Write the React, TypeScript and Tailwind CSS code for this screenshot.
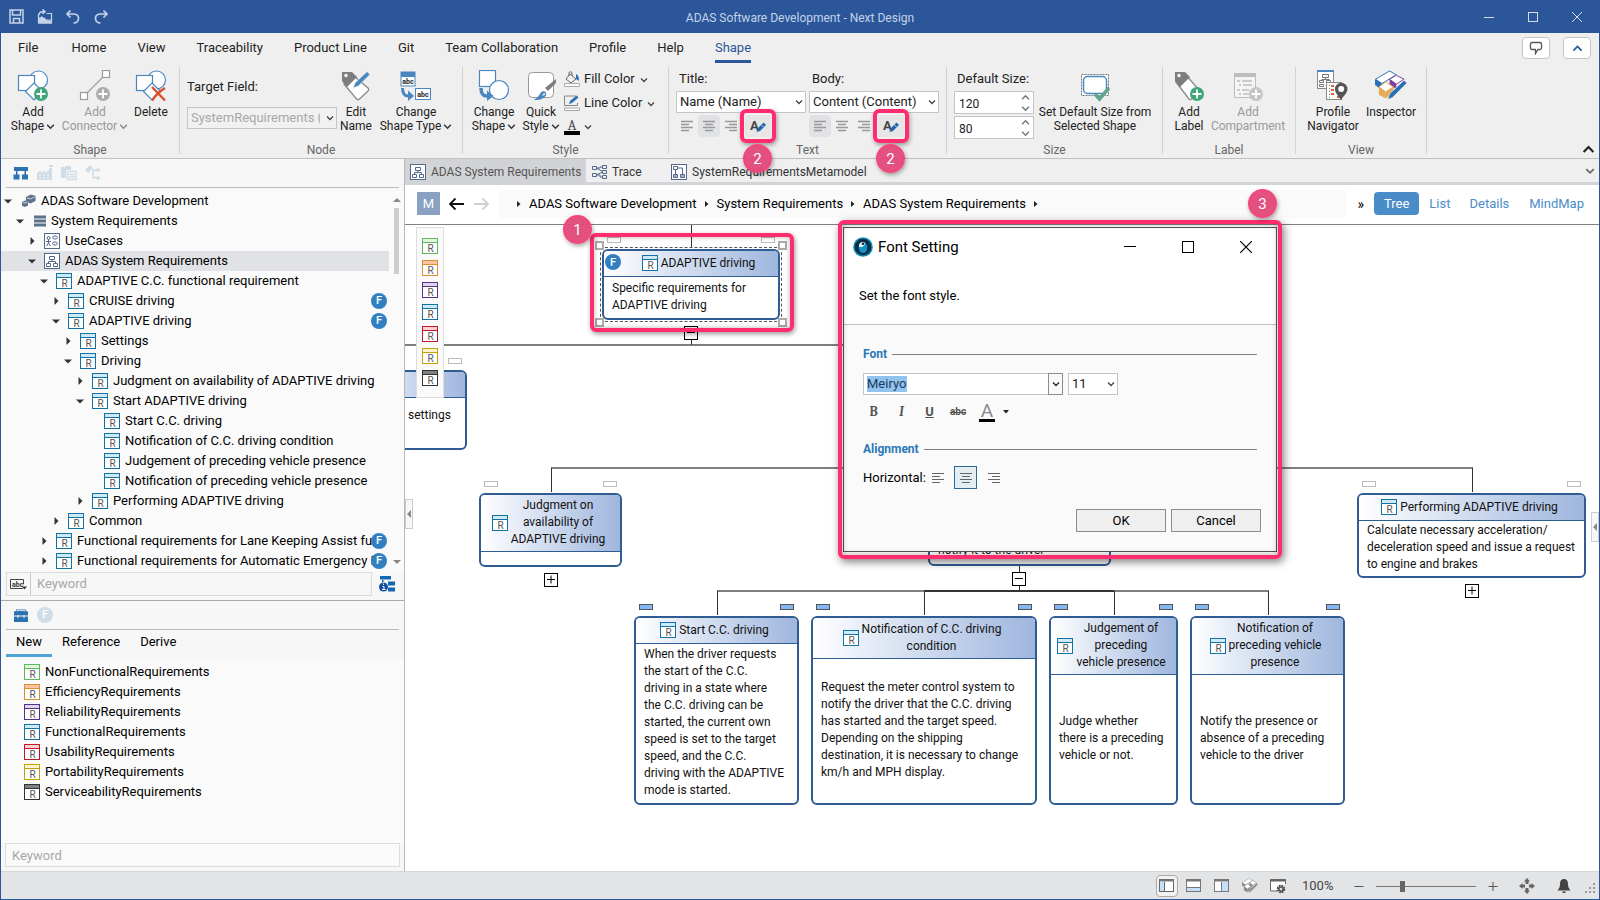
import { useState } from 'react';
import type { ReactNode } from 'react';
import clsx from 'clsx';

type Tone = 'green' | 'orange' | 'purple' | 'blue' | 'red' | 'yellow' | 'black';

const tones: Record<Tone, { line: string; fill: string }> = {
  green: { line: '#5cb85c', fill: '#e6f6dc' },
  orange: { line: '#d9902f', fill: '#fbc4a4' },
  purple: { line: '#5b2d8c', fill: '#dcd6ea' },
  blue: { line: '#1272a6', fill: '#cfe9f5' },
  red: { line: '#c01828', fill: '#fbd0d6' },
  yellow: { line: '#bfa10a', fill: '#fbf3cf' },
  black: { line: '#333333', fill: '#808080' }
};

function ReqIcon({ tone = 'blue' }: { tone?: Tone }) {
  const t = tones[tone];
  return (
    <svg width="16" height="16" viewBox="0 0 16 16" className="shrink-0">
      <rect x="0.5" y="0.5" width="15" height="15" fill="#fff" stroke={t.line} />
      <rect x="1" y="1" width="14" height="3" fill={t.fill} />
      <path d="M1 4.5h14" stroke={t.line} />
      <text x="8.5" y="14" textAnchor="middle" fontSize="10" fontFamily="Roboto, sans-serif" fill="#555">R</text>
    </svg>
  );
}

function Chevron({ dir = 'down', color = '#444', size = 8 }: { dir?: 'down' | 'up'; color?: string; size?: number }) {
  return (
    <svg width={size} height={size} viewBox="0 0 8 8" className="inline-block shrink-0">
      <path d={dir === 'down' ? 'M1 2.5L4 5.5L7 2.5' : 'M1 5.5L4 2.5L7 5.5'} fill="none" stroke={color} strokeWidth="1.3" />
    </svg>
  );
}

function FBadge({ faded }: { faded?: boolean }) {
  return (
    <span className={clsx('flex size-4 shrink-0 items-center justify-center rounded-full text-[11px] font-medium text-white', faded ? 'bg-[#cfdde6]' : 'bg-[#2f7fc1]')}>
      F
    </span>
  );
}

/* ---------- ribbon icons ---------- */

const PlusDisc = ({ color }: { color: string }) => (
  <>
    <circle cx="24" cy="24" r="7" fill={color} />
    <path d="M24 19.5v9M19.5 24h9" stroke="#fff" strokeWidth="1.8" />
  </>
);

const ShapesBase = () => (
  <g fill="#fff" stroke="#4a86c0" strokeWidth="1.2">
    <circle cx="21.5" cy="10" r="9" />
    <rect x="1.5" y="5.5" width="16" height="15" />
    <path d="M17 13l8.5 8.5-8.5 8.5-8.5-8.5z" />
  </g>
);

const AddShapeIcon = () => (
  <svg width="32" height="32" viewBox="0 0 32 32"><ShapesBase /><PlusDisc color="#3fa67a" /></svg>
);

const DeleteIcon = () => (
  <svg width="32" height="32" viewBox="0 0 32 32">
    <ShapesBase />
    <path d="M17 17l13 13.5M30 18c-5 3-10 8-13 12.5" stroke="#dd4f2b" strokeWidth="2.4" fill="none" />
  </svg>
);

const ConnectorIcon = () => (
  <svg width="32" height="32" viewBox="0 0 32 32">
    <path d="M5 26L27 4" stroke="#aaa" strokeWidth="1.6" />
    <rect x="1.5" y="22.5" width="7" height="7" fill="#fff" stroke="#999" strokeWidth="1.2" />
    <rect x="23.5" y="0.5" width="7" height="7" fill="#fff" stroke="#999" strokeWidth="1.2" />
    <PlusDisc color="#acacac" />
  </svg>
);

const TagShape = () => (
  <>
    <path d="M2 2h10l5 5L7 17l-5-6z" fill="#7d7d7d" />
    <circle cx="6" cy="5.5" r="1.7" fill="#fff" />
  </>
);

const EditNameIcon = () => (
  <svg width="32" height="32" viewBox="0 0 32 32">
    <path d="M14 6L28.5 18.5Q29 20 28 21L19 29.5Q18 30 17 29.5L4 14z" fill="#fff" stroke="#888" strokeWidth="1.3" />
    <TagShape />
    <path d="M13 18l2-5L27 1.5l3 3L18.5 16z" fill="#4a86c0" stroke="#efefef" strokeWidth="0.8" />
  </svg>
);

const AddLabelIcon = () => (
  <svg width="32" height="32" viewBox="0 0 32 32">
    <path d="M12 4L27 21Q27.500 22 27 23L18 29.5Q17 30 16 29L3 12z" fill="#fff" stroke="#888" strokeWidth="1.3" />
    <TagShape />
    <PlusDisc color="#3fa67a" />
  </svg>
);

const ChangeTypeIcon = () => (
  <svg width="32" height="32" viewBox="0 0 32 32">
    <rect x="1" y="2" width="14" height="14" fill="#fff" stroke="#4a86c0" />
    <rect x="1" y="2" width="14" height="5" fill="#4a86c0" />
    <text x="8" y="14" textAnchor="middle" fontSize="7" fontWeight="700" fontFamily="Roboto, sans-serif" fill="#222">abc</text>
    <rect x="15.5" y="18.5" width="15" height="11" fill="#fff" stroke="#4a86c0" />
    <text x="23" y="27" textAnchor="middle" fontSize="7" fontWeight="700" fontFamily="Roboto, sans-serif" fill="#222">abc</text>
    <path d="M2.5 18c0 6 2 8 6 8" fill="none" stroke="#4a86c0" strokeWidth="3" />
    <path d="M8 20.5l6 5.500-6 5z" fill="#4a86c0" />
  </svg>
);

const ChangeShapeIcon = () => (
  <svg width="32" height="32" viewBox="0 0 32 32">
    <rect x="1.5" y="0.5" width="16" height="16" fill="#fff" stroke="#4a86c0" strokeWidth="1.2" />
    <circle cx="21" cy="20" r="9.5" fill="#fff" stroke="#4a86c0" strokeWidth="1.2" />
    <path d="M3 18c0 6 2 8 6 8" fill="none" stroke="#4a86c0" strokeWidth="3.5" />
    <path d="M9 20.5l6.5 5.500L9 31z" fill="#4a86c0" />
  </svg>
);

const QuickStyleIcon = () => (
  <svg width="32" height="32" viewBox="0 0 32 32">
    <rect x="3.5" y="2.5" width="25" height="25" rx="4" fill="#fff" stroke="#999" />
    <path d="M31 9v4l-8 8-3-3z" fill="#7d7d7d" />
    <path d="M8 30c5-1 6-6 9-8.5 3-1 5 1 4 4C19 29 14 30.5 8 30z" fill="#4a86c0" />
    <path d="M17 26l2-3 1.5 1.5z" fill="#fff" />
  </svg>
);

const DefaultSizeIcon = () => (
  <svg width="32" height="32" viewBox="0 0 32 32">
    <rect x="2.5" y="4.5" width="27" height="21" fill="#fff" stroke="#777" strokeDasharray="2 1" />
    <rect x="4.5" y="6.5" width="23" height="17" rx="4" fill="#fff" stroke="#4a86c0" strokeWidth="1.5" />
    <path d="M16 24l4.5 5L30 18" fill="none" stroke="#5fa58c" strokeWidth="3.5" />
  </svg>
);

const CompartmentIcon = () => (
  <svg width="32" height="32" viewBox="0 0 32 32">
    <rect x="2.5" y="4.5" width="21" height="23" fill="#f4f4f4" stroke="#bdbdbd" />
    <rect x="2" y="3" width="22" height="4" fill="#bdbdbd" />
    <path d="M5 11h3M10 11h10M7 15h2M11 15h9M5 20h3M10 20h7M7 24h2M11 24h6" stroke="#bdbdbd" strokeWidth="1.5" />
    <PlusDisc color="#c4c4c4" />
  </svg>
);

const NavigatorIcon = () => (
  <svg width="32" height="32" viewBox="0 0 32 32">
    <rect x="0.5" y="0.5" width="16" height="18" fill="#fff" stroke="#888" />
    <rect x="0" y="0" width="17" height="2" fill="#4a86c0" />
    <path d="M5.5 4.5h6v3h-6zM2.5 10.5h4v2h-4zM9.5 10.5h4v2h-4zM2.5 14.5h4v2h-4zM8.5 7.5v2M4.5 9.5h8" fill="none" stroke="#777" />
    <rect x="9.5" y="12.5" width="15" height="17" fill="#fff" stroke="#888" />
    <path d="M12.5 15v14" stroke="#777" strokeDasharray="1 2" />
    <path d="M14 16h3M14 20h3M14 24h3M20 27h3" stroke="#d9603b" strokeWidth="2" />
    <path d="M24 30c-3-5-6-7-6-11a6.200 6.200 0 0 1 12.400 0c0 4-3.400 6-6.400 11z" fill="#555" />
    <circle cx="24.2" cy="19" r="3" fill="#fff" />
  </svg>
);

const InspectorIcon = ({ size = 32, mono }: { size?: number; mono?: boolean }) => {
  const blue = mono ? '#8a8a8a' : '#2b6fb5';
  const purple = mono ? '#8a8a8a' : '#8040a0';
  const gold = mono ? '#8a8a8a' : '#e8ab55';
  return (
    <svg width={size} height={size} viewBox="0 0 33 32">
      <path d="M0.500 9L15 0.500l7 4-15 9z" fill="#fff" stroke={blue} />
      <path d="M0 9l7 4v7l-7-5z" fill={blue} />
      <path d="M15 9l7-4 8 4-8 5z" fill="#fff" stroke={purple} />
      <path d="M15 9l7 5v5l-7-4z" fill={purple} />
      <path d="M4 17l7-5 8 5-8 5z" fill="#fff" stroke={gold} />
      <path d="M4 17l7 5v7l-7-4z" fill={gold} />
      <path d="M11 22l8-5v6l-8 6z" fill={gold} />
      <path d="M13 30l2-6L30 10l3 3-15 15z" fill={blue} stroke={mono ? '#e4e5e7' : '#efefef'} strokeWidth="0.8" />
    </svg>
  );
};

function AlignIcon({ kind, color = '#999', weight = 1.6 }: { kind: 'left' | 'center' | 'right'; color?: string; weight?: number }) {
  const paths = {
    left: 'M0 1.5h12M0 4.5h8M0 7.5h12M0 10.5h8',
    center: 'M0 1.5h12M2 4.5h8M0 7.5h12M2 10.5h8',
    right: 'M0 1.5h12M4 4.5h8M0 7.5h12M4 10.5h8'
  };
  return (
    <svg width="14" height="12" viewBox="-1 0 14 12">
      <path d={paths[kind]} stroke={color} strokeWidth={weight} />
    </svg>
  );
}

const FontPencilIcon = () => (
  <svg width="16" height="14" viewBox="0 0 16 14">
    <text x="0" y="11" fontSize="13" fontWeight="700" fontFamily="Roboto, sans-serif" fill="#444">A</text>
    <path d="M6.5 13l1-3.500 6-6 2.500 2.500-6 6z" fill="#1f66ad" />
    <path d="M11 5.5l2.5 2.500" stroke="#efefef" strokeWidth="0.8" />
  </svg>
);

/* ---------- small icons ---------- */

const TreeBoxIcon = () => (
  <svg width="16" height="16" viewBox="0 0 16 16" className="shrink-0" fill="none" stroke="#54698a">
    <rect x="0.5" y="0.5" width="15" height="15" fill="#fff" />
    <path d="M5.5 3.5h5v3h-5zM2.5 10.5h4v3h-4zM9.5 10.5h4v3h-4zM8 6.5v2M4.5 10.5v-2h7v2" />
  </svg>
);

const UseCaseIcon = () => (
  <svg width="16" height="16" viewBox="0 0 16 16" className="shrink-0" fill="none" stroke="#54698a">
    <rect x="0.5" y="0.5" width="15" height="15" fill="#fff" />
    <circle cx="4.5" cy="5" r="1.5" />
    <path d="M2 8.5h5M4.5 6.5v3.500M2.5 13l2-3 2 3" />
    <ellipse cx="11" cy="4.5" rx="2.5" ry="1.5" />
    <ellipse cx="11" cy="10.5" rx="2.5" ry="1.5" />
  </svg>
);

const TraceIcon = () => (
  <svg width="16" height="16" viewBox="0 0 16 16" className="shrink-0" fill="none" stroke="#54698a">
    <path d="M0.5 2.5h4v3h-4zM0.5 9.5h4v3h-4zM10.5 1.5h4v3h-4zM10.5 6.5h4v3h-4zM10.5 11.5h4v3h-4zM4.5 4l6 3.500M4.5 11l6-3M4.5 4h3.500v-1h2.500M4.5 11h3.500v2h2.500" />
  </svg>
);

const MetaIcon = () => (
  <svg width="16" height="16" viewBox="0 0 16 16" className="shrink-0" fill="none" stroke="#54698a">
    <rect x="0.5" y="0.5" width="15" height="15" fill="#fff" />
    <path d="M2.5 2.5h4v3h-4zM2.5 10.5h4v3h-4zM9.5 10.5h4v3h-4zM4.5 5.5v5M6.5 4h5v6.500M2.5 12h4M9.5 12h4" />
  </svg>
);

const ProjectIcon = () => (
  <svg width="14" height="14" viewBox="0 0 14 14" className="shrink-0">
    <path d="M4 3l5-2.500 4.500 1.500v5l-5 2.500-4.500-2z" fill="#5d7389" />
    <path d="M0 8l3-1.500 3 1v4L3 13l-3-1z" fill="#5d7389" />
    <path d="M1 8.5l2 .5 2.500-1M5 4l3.500 1 4-2" fill="none" stroke="#fff" strokeWidth="0.7" />
  </svg>
);

const PackageIcon = () => (
  <svg width="12" height="12" viewBox="0 0 12 12" className="shrink-0">
    <path d="M0 2h12M0 6h12M0 10h12" stroke="#5d7389" strokeWidth="3" />
  </svg>
);

/* ---------- title bar & menu ---------- */

function TitleBar() {
  return (
    <header className="grid h-8 shrink-0 grid-cols-3 items-center bg-[#2b579a] text-[#c5d3e8]">
      <div className="flex items-center gap-3 pl-2">
        <button aria-label="Save">
          <svg width="16" height="16" viewBox="0 0 16 16" fill="none" stroke="#c5d3e8" strokeWidth="1.5">
            <path d="M1 1h13v13h-13zM3.5 1.5v4.500h8v-4.500M4.5 14v-4.500h6v4.500" />
          </svg>
        </button>
        <button aria-label="Open">
          <svg width="16" height="16" viewBox="0 0 16 16" fill="none" stroke="#c5d3e8" strokeWidth="1.2">
            <path d="M1.5 5v9h13V4.500h-5M1.5 13l3-5 4 3h6" />
            <path d="M2 9h5l3 3h4v2H2z" fill="#c5d3e8" />
            <path d="M2 6c0-3 2-3.500 5-3.500M5.5 0.5l2.500 2-2.500 2.500" strokeWidth="1.5" />
          </svg>
        </button>
        <button aria-label="Undo">
          <svg width="16" height="16" viewBox="0 0 16 16" fill="none" stroke="#c5d3e8" strokeWidth="1.7">
            <path d="M5.5 1.5L2 5l3.500 3.500M2 5h7.500c5.500 1 5.500 8.500-1 9" />
          </svg>
        </button>
        <button aria-label="Redo">
          <svg width="16" height="16" viewBox="0 0 16 16" fill="none" stroke="#c5d3e8" strokeWidth="1.7">
            <path d="M10.5 1.5L14 5l-3.500 3.500M14 5H6.500C1 6 1 13.500 7.500 14" />
          </svg>
        </button>
      </div>
      <h1 className="pt-px text-center text-xs">ADAS Software Development - Next Design</h1>
      <div className="flex items-center justify-end gap-8 pr-4">
        <button aria-label="Minimize">
          <svg width="12" height="12" viewBox="0 0 12 12"><path d="M1 6.500h10" stroke="#d5deec" /></svg>
        </button>
        <button aria-label="Maximize">
          <svg width="12" height="12" viewBox="0 0 12 12"><rect x="1.5" y="1.5" width="9" height="9" fill="none" stroke="#d5deec" /></svg>
        </button>
        <button aria-label="Close">
          <svg width="12" height="12" viewBox="0 0 12 12"><path d="M1 1l10 10M11 1L1 11" stroke="#d5deec" /></svg>
        </button>
      </div>
    </header>
  );
}

const menus = ['File', 'Home', 'View', 'Traceability', 'Product Line', 'Git', 'Team Collaboration', 'Profile', 'Help', 'Shape'];

function MenuBar() {
  const [active, setActive] = useState('Shape');
  return (
    <nav className="flex h-[34px] shrink-0 items-start gap-[31px] bg-[#efefef] pl-[17px] pr-2">
      {menus.map((m, i) => (
        <button
          key={m}
          onClick={() => setActive(m)}
          className={clsx('h-[30px] border-b-[3px] pt-0.5', i === 0 && 'mr-0.5', m === active ? 'border-[#2b579a] text-[#2b579a]' : 'border-transparent text-[#222]')}
        >
          {m}
        </button>
      ))}
      <div className="ml-auto flex gap-[13px] pt-1">
        <button aria-label="Feedback" className="flex h-[22px] w-7 items-center justify-center rounded border border-[#c4c4c4] bg-white">
          <svg width="14" height="14" viewBox="0 0 14 14" fill="none" stroke="#555" strokeWidth="1.3">
            <path d="M3 1.5h8q1.500 0 1.500 1.500v4q0 1.500-1.500 1.500H9L6.500 12.500V8.500H3Q1.500 8.500 1.500 7V3Q1.500 1.500 3 1.500z" />
          </svg>
        </button>
        <button aria-label="Collapse ribbon" className="flex h-[22px] w-7 items-center justify-center rounded border border-[#c4c4c4] bg-white">
          <Chevron dir="up" color="#2b579a" size={11} />
        </button>
      </div>
    </nav>
  );
}

/* ---------- ribbon ---------- */

interface GroupProps {
  label: string;
  className: string;
  innerClass?: string;
  children: ReactNode;
}

function Group({ label, className, innerClass, children }: GroupProps) {
  return (
    <section className={clsx('flex shrink-0', className)}>
      <div className="flex min-w-0 flex-1 flex-col">
        <div className={clsx('flex h-[76px]', innerClass)}>{children}</div>
        <div className="text-center text-xs leading-[14px] text-[#666]">{label}</div>
      </div>
      <div className="h-[87px] w-px bg-[#d0d2d6]" />
    </section>
  );
}

interface BigButtonProps {
  icon: ReactNode;
  lines: string[];
  menu?: boolean;
  disabled?: boolean;
  className: string;
}

function BigButton({ icon, lines, menu, disabled, className }: BigButtonProps) {
  return (
    <button disabled={disabled} className={clsx('flex shrink-0 flex-col items-center pt-[3px] text-xs leading-[14px]', disabled ? 'text-[#999]' : 'text-[#222]', className)}>
      <span className="mb-[3px] block">{icon}</span>
      {lines.map((l, i) => (
        <span key={l} className="flex items-center gap-0.5 whitespace-nowrap">
          {l}
          {menu && i === lines.length - 1 && <Chevron size={9} color={disabled ? '#888' : '#333'} />}
        </span>
      ))}
    </button>
  );
}

function Combo({ label, value, disabled, className }: { label: string; value: string; disabled?: boolean; className: string }) {
  return (
    <div className={clsx('relative', className)}>
      <select
        aria-label={label}
        disabled={disabled}
        defaultValue={value}
        className={clsx('h-[22px] w-full appearance-none rounded-none border border-[#c3c5c9] pl-[3px] pr-4', disabled ? 'bg-[#f1f1f1] text-[#a8a8a8]' : 'bg-white text-[#222]')}
      >
        <option>{value}</option>
      </select>
      <span className="pointer-events-none absolute inset-y-0 right-[3px] flex items-center">
        <Chevron />
      </span>
    </div>
  );
}

function Spinner({ label, value }: { label: string; value: string }) {
  return (
    <div className="flex h-[23px] w-20 items-center border border-[#c3c5c9] bg-white">
      <input aria-label={label} defaultValue={value} className="min-w-0 flex-1 pl-1 pt-0.5 text-xs text-[#222] outline-none" />
      <div className="flex w-4 flex-col items-center">
        <button aria-label={`Increase ${label}`} className="flex h-[11px] items-center"><Chevron dir="up" color="#777" size={9} /></button>
        <button aria-label={`Decrease ${label}`} className="flex h-[11px] items-center"><Chevron color="#777" size={9} /></button>
      </div>
    </div>
  );
}

function Marker({ n }: { n: number }) {
  return (
    <span className="flex size-[29px] items-center justify-center rounded-full border-2 border-[#f5457a] bg-[#e2487a]/95 text-[15px] text-white shadow-[1px_2px_4px_rgba(0,0,0,0.35)]">
      {n}
    </span>
  );
}

function TextColumn({ title, value, active, className }: { title: string; value: string; active: 'left' | 'center'; className?: string }) {
  return (
    <div className={clsx('w-[130px]', className)}>
      <div className="mb-1 h-5 pl-[3px] pt-1 leading-4">{title}</div>
      <Combo label={title} value={value} className="w-[130px]" />
      <div className="mt-0.5 flex h-[22px] items-center">
        {(['left', 'center', 'right'] as const).map((k) => (
          <button key={k} aria-label={`Align ${k}`} className={clsx('flex size-[22px] items-center justify-center rounded-sm', k === active && 'bg-[#e0e2e5]')}>
            <AlignIcon kind={k} />
          </button>
        ))}
        <div className="relative ml-[3px]">
          <button aria-label={`${title} font`} className="flex h-[22px] w-[26px] items-center justify-center bg-[#e6e6e6]">
            <FontPencilIcon />
          </button>
          <div className="pointer-events-none absolute -inset-x-[5px] -inset-y-[6px] rounded-md border-4 border-[#ff2d6e] shadow-[1px_2px_4px_rgba(0,0,0,0.35)]" />
          <div className="pointer-events-none absolute -left-0.5 top-[29px] z-20">
            <Marker n={2} />
          </div>
        </div>
      </div>
    </div>
  );
}

function Ribbon() {
  return (
    <div className="flex h-[92px] shrink-0 border-b border-[#c0c0c0] bg-[#efefef]">
      <Group label="Shape" className="w-[179px]" innerClass="pl-px">
        <BigButton icon={<AddShapeIcon />} lines={['Add', 'Shape']} menu className="w-[62px]" />
        <BigButton icon={<ConnectorIcon />} lines={['Add', 'Connector']} menu disabled className="w-[62px]" />
        <BigButton icon={<DeleteIcon />} lines={['Delete']} className="w-[50px]" />
      </Group>
      <Group label="Node" className="w-[283px]">
        <div className="pl-[7px]">
          <div className="mb-3 pt-3 leading-4">Target Field:</div>
          <Combo label="Target Field" value="SystemRequirements (" disabled className="w-[150px]" />
        </div>
        <BigButton icon={<EditNameIcon />} lines={['Edit', 'Name']} className="w-[38px]" />
        <BigButton icon={<ChangeTypeIcon />} lines={['Change', 'Shape Type']} menu className="w-[82px]" />
      </Group>
      <Group label="Style" className="w-[206px]">
        <BigButton icon={<ChangeShapeIcon />} lines={['Change', 'Shape']} menu className="w-[62px]" />
        <BigButton icon={<QuickStyleIcon />} lines={['Quick', 'Style']} menu className="w-[32px]" />
        <div className="flex flex-col pl-[7px] text-[#222]">
          <button className="flex h-6 items-center gap-1 whitespace-nowrap">
            <svg width="16" height="16" viewBox="0 0 16 16" fill="none" stroke="#666">
              <path d="M6 3l6 5-5 4-5-4zM5 5V1.500q1.500-1.500 3 0V5" />
              <path d="M12 3q3 1 3 7l-3-2z" fill="#2b6fb5" stroke="none" />
              <path d="M0.5 12.5h15v3h-15z" fill="#fff" stroke="#aaa" />
            </svg>
            Fill Color <span className="pl-px"><Chevron /></span>
          </button>
          <button className="flex h-6 items-center gap-1 whitespace-nowrap">
            <svg width="16" height="16" viewBox="0 0 16 16" fill="none" stroke="#888">
              <path d="M12 1H0.500v9.500h13V8" />
              <path d="M5 9l1-3 6.500-5.500 2 2L8 8z" fill="#2b6fb5" stroke="none" />
              <path d="M0.5 13h15v2.500h-15z" fill="#fff" stroke="#aaa" />
            </svg>
            Line Color <span className="pl-px"><Chevron /></span>
          </button>
          <button aria-label="Text color" className="flex h-6 items-center gap-1">
            <span className="flex w-4 justify-center border-b-4 border-black font-serif text-[15px] leading-[12px] text-[#555]">A</span>
            <Chevron />
          </button>
        </div>
      </Group>
      <Group label="Text" className="w-[278px]" innerClass="pl-[7px]">
        <TextColumn title="Title:" value="Name (Name)" active="center" />
        <TextColumn title="Body:" value="Content (Content)" active="left" className="ml-[3px]" />
      </Group>
      <Group label="Size" className="w-[216px]" innerClass="pl-[7px]">
        <div className="flex flex-col">
          <div className="mb-1 h-5 pl-[3px] pt-1 leading-4">Default Size:</div>
          <div className="flex flex-col gap-0.5">
            <Spinner label="width" value="120" />
            <Spinner label="height" value="80" />
          </div>
        </div>
        <BigButton icon={<DefaultSizeIcon />} lines={['Set Default Size from', 'Selected Shape']} className="w-[122px]" />
      </Group>
      <Group label="Label" className="w-[133px]" innerClass="pl-1.5">
        <BigButton icon={<AddLabelIcon />} lines={['Add', 'Label']} className="w-10" />
        <BigButton icon={<CompartmentIcon />} lines={['Add', 'Compartment']} disabled className="w-[78px]" />
      </Group>
      <Group label="View" className="w-[131px]" innerClass="pl-[7px]">
        <BigButton icon={<NavigatorIcon />} lines={['Profile', 'Navigator']} className="w-[60px]" />
        <BigButton icon={<InspectorIcon />} lines={['Inspector']} className="w-14" />
      </Group>
      <button aria-label="Minimize ribbon" className="ml-auto self-end px-1"><Chevron dir="up" color="#222" size={13} /></button>
    </div>
  );
}

/* ---------- left panel ---------- */

interface TreeRow {
  level: number;
  label: string;
  icon: 'project' | 'package' | 'usecase' | 'tree' | 'req';
  state?: 'open' | 'closed';
  badge?: boolean;
  selected?: boolean;
}

const rows: TreeRow[] = [
  { level: 0, label: 'ADAS Software Development', icon: 'project', state: 'open' },
  { level: 1, label: 'System Requirements', icon: 'package', state: 'open' },
  { level: 2, label: 'UseCases', icon: 'usecase', state: 'closed' },
  { level: 2, label: 'ADAS System Requirements', icon: 'tree', state: 'open', selected: true },
  { level: 3, label: 'ADAPTIVE C.C. functional requirement', icon: 'req', state: 'open' },
  { level: 4, label: 'CRUISE driving', icon: 'req', state: 'closed', badge: true },
  { level: 4, label: 'ADAPTIVE driving', icon: 'req', state: 'open', badge: true },
  { level: 5, label: 'Settings', icon: 'req', state: 'closed' },
  { level: 5, label: 'Driving', icon: 'req', state: 'open' },
  { level: 6, label: 'Judgment on availability of ADAPTIVE driving', icon: 'req', state: 'closed' },
  { level: 6, label: 'Start ADAPTIVE driving', icon: 'req', state: 'open' },
  { level: 7, label: 'Start C.C. driving', icon: 'req' },
  { level: 7, label: 'Notification of C.C. driving condition', icon: 'req' },
  { level: 7, label: 'Judgement of preceding vehicle presence', icon: 'req' },
  { level: 7, label: 'Notification of preceding vehicle presence', icon: 'req' },
  { level: 6, label: 'Performing ADAPTIVE driving', icon: 'req', state: 'closed' },
  { level: 4, label: 'Common', icon: 'req', state: 'closed' },
  { level: 3, label: 'Functional requirements for Lane Keeping Assist func', icon: 'req', state: 'closed', badge: true },
  { level: 3, label: 'Functional requirements for Automatic Emergency Br', icon: 'req', state: 'closed', badge: true }
];

const treeIcons = {
  project: <ProjectIcon />,
  package: <PackageIcon />,
  usecase: <UseCaseIcon />,
  tree: <TreeBoxIcon />,
  req: <ReqIcon />
};

function ModelTree() {
  return (
    <div className="flex bg-[#fafafa]">
      <ul className="min-w-0 flex-1 text-black">
        {rows.map((r) => (
          <li
            key={r.label}
            className={clsx('relative flex h-5 items-center overflow-hidden whitespace-nowrap', r.selected && 'bg-[#e1e2e6]')}
            style={{ paddingLeft: 3 + r.level * 12 }}
          >
            <span className="flex w-4 shrink-0 items-center">
              {r.state === 'open' && <svg width="8" height="8" viewBox="0 0 8 8"><path d="M0 2.5h8L4 6.500z" fill="#333" /></svg>}
              {r.state === 'closed' && <svg width="8" height="8" viewBox="0 0 8 8"><path d="M2.500 0l4 4-4 4z" fill="#333" /></svg>}
            </span>
            <span className={clsx('flex items-center gap-[5px]', r.level < 2 && 'pl-0.5')}>
              {treeIcons[r.icon]}
              {r.label}
            </span>
            {r.badge && <span className="absolute right-0.5 top-0.5"><FBadge /></span>}
          </li>
        ))}
      </ul>
      <div className="flex w-[15px] flex-col items-center justify-between py-1.5">
        <div className="flex flex-col items-center gap-1.5">
          <svg width="8" height="5" viewBox="0 0 8 5"><path d="M0 5l4-4 4 4z" fill="#888" /></svg>
          <div className="h-[66px] w-[5px] bg-[#cdcdcd]" />
        </div>
        <svg width="8" height="5" viewBox="0 0 8 5"><path d="M0 0l4 4 4-4z" fill="#888" /></svg>
      </div>
    </div>
  );
}

const requirementKinds: { label: string; tone: Tone }[] = [
  { label: 'NonFunctionalRequirements', tone: 'green' },
  { label: 'EfficiencyRequirements', tone: 'orange' },
  { label: 'ReliabilityRequirements', tone: 'purple' },
  { label: 'FunctionalRequirements', tone: 'blue' },
  { label: 'UsabilityRequirements', tone: 'red' },
  { label: 'PortabilityRequirements', tone: 'yellow' },
  { label: 'ServiceabilityRequirements', tone: 'black' }
];

function SidePanel() {
  const [tab, setTab] = useState('New');
  return (
    <aside className="flex w-[404px] shrink-0 flex-col border-r border-[#b8b8b8] bg-[#f7f7f7]">
      <div className="mx-[5px] flex h-[29px] shrink-0 items-center gap-2 border-b border-[#bbb] pl-[7px]">
        <button aria-label="Model">
          <svg width="16" height="16" viewBox="0 0 16 16"><path d="M1 2h14v4H1zM0.500 9.500h6v5h-6zM9 9.500h6v5h-6zM3 6h1.500v4H3zM11.500 6H13v4h-1.500z" fill="#2b72b0" /></svg>
        </button>
        <button aria-label="Product line">
          <svg width="16" height="16" viewBox="0 0 16 16"><path d="M0 15V8l4-3v3l4-3v3l4-3V3h3v12zM12 0h4v2h-4z" fill="#cfdde8" /><path d="M2 10h2M6 10h2M10 10h2M2 13h2M6 13h2M10 13h2" stroke="#f7f7f7" /></svg>
        </button>
        <button aria-label="Files">
          <svg width="16" height="16" viewBox="0 0 16 16"><path d="M0 2h4l1-1h5v4H5v8H0z" fill="#cfdde8" /><path d="M6.5 6.5h9v8h-9zM8 9.5h6M8 12h6" fill="none" stroke="#cfdde8" strokeWidth="1.5" /></svg>
        </button>
        <button aria-label="Relations">
          <svg width="16" height="16" viewBox="0 0 16 16"><path d="M0 5l5-5 3 3-5 5zM10 5l3-2 2.500 2-2.500 2zM10 13l3-2 2.500 2-2.500 2.500z" fill="#cfdde8" /><path d="M7 5h4M8 5v7.500h3" fill="none" stroke="#cfdde8" strokeWidth="1.5" /></svg>
        </button>
      </div>
      <div className="pt-[3px]"><ModelTree /></div>
      <div className="flex h-[30px] shrink-0 items-start border-b border-[#aaa] pl-[5px] pr-[9px] pt-px">
        <div className="flex h-6 flex-1 items-center border border-[#dcdcdc]">
          <button aria-label="Search options" className="flex h-full w-6 items-center justify-center border-r border-[#c8c8c8]">
            <svg width="17" height="12" viewBox="0 0 17 12">
              <path d="M13 10.5H0.500v-9h13V6" fill="none" stroke="#444" />
              <text x="2" y="8.5" fontSize="7" fontWeight="700" fontFamily="Roboto, sans-serif" fill="#333">abc</text>
              <path d="M12 8.5h5l-2.500 3z" fill="#333" />
            </svg>
          </button>
          <input aria-label="Search model" placeholder="Keyword" className="min-w-0 flex-1 bg-transparent pl-1.5 outline-none placeholder:text-[#a8a8a8]" />
        </div>
        <button aria-label="Show info" className="ml-[7px] mt-1">
          <svg width="16" height="16" viewBox="0 0 16 16"><path d="M1 0h11v3.500H1zM9 5.500h7v4H9zM9 11.500h7v4H9zM3 4h1.500v2H3z" fill="#1566b0" /><circle cx="4.5" cy="11" r="4.5" fill="#1150a0" /><path d="M4.5 7.5v1.500M3.5 10.5h1.500v3M3 13.500h3.500" fill="none" stroke="#fff" /></svg>
        </button>
      </div>
      <div className="mx-[5px] flex h-[29px] shrink-0 items-center gap-2 border-b border-[#bbb] pl-[7px]">
        <button aria-label="Toolbox">
          <svg width="16" height="16" viewBox="0 0 16 16"><path d="M3 5V2.500h10V5M1 5l1-1h12l1 1v3.500H1zM1 9.500h14V15H1z" fill="#2b72b0" /><path d="M4 4.5V3.500h8v1" fill="none" stroke="#f7f7f7" strokeWidth="0.8" /><path d="M5 8v3M11 8v3" stroke="#f7f7f7" /></svg>
        </button>
        <FBadge faded />
      </div>
      <div className="ml-[5px] flex h-[30px] shrink-0 items-start text-black">
        {['New', 'Reference', 'Derive'].map((t) => (
          <button key={t} onClick={() => setTab(t)} className={clsx('h-[27px] border-b-[3px] px-2.5', t === tab ? 'border-[#4fa3d8]' : 'border-transparent')}>
            {t}
          </button>
        ))}
      </div>
      <ul className="min-h-0 flex-1 bg-[#fafafa] pl-[23px] pt-0.5 text-black">
        {requirementKinds.map((k) => (
          <li key={k.label} className="flex h-5 items-center gap-[5px]"><ReqIcon tone={k.tone} />{k.label}</li>
        ))}
      </ul>
      <input aria-label="Filter toolbox" placeholder="Keyword" className="mx-1 mb-1 h-6 shrink-0 border border-[#dcdcdc] bg-[#fafafa] px-1.5 outline-none placeholder:text-[#a8a8a8]" />
    </aside>
  );
}

/* ---------- document area ---------- */

function DocumentTabs() {
  return (
    <div className="flex h-[26px] shrink-0 items-stretch border-b-[3px] border-[#d2d3d7] bg-[#efefef] text-xs text-[#333]">
      <button className="flex w-[181px] items-center gap-[5px] whitespace-nowrap bg-[#d2d3d7] pl-[5px] pt-0.5 text-[#555]"><TreeBoxIcon />ADAS System Requirements</button>
      <button className="flex w-[80px] items-center gap-1 pl-1.5 pt-0.5"><TraceIcon />Trace</button>
      <button className="flex items-center gap-[5px] pl-[5px] pt-0.5"><MetaIcon />SystemRequirementsMetamodel</button>
      <button aria-label="Tab list" className="ml-auto px-1"><Chevron color="#666" size={10} /></button>
    </div>
  );
}

const crumbs = ['ADAS Software Development', 'System Requirements', 'ADAS System Requirements'];

const CrumbArrow = () => (
  <svg width="4" height="6" viewBox="0 0 4 6"><path d="M0 0l3.500 3L0 6z" fill="#222" /></svg>
);

function Breadcrumbs() {
  return (
    <div className="flex h-10 shrink-0 items-center border-b border-[#808080] bg-white pb-0.5 text-black">
      <button className="ml-3 size-[23px] bg-[#8ba1c4] text-white">M</button>
      <button aria-label="Back" className="ml-2">
        <svg width="17" height="14" viewBox="0 0 17 14" fill="none" stroke="#111" strokeWidth="1.8"><path d="M16 7H2M7.5 1.5L2 7l5.500 5.500" /></svg>
      </button>
      <button aria-label="Forward" className="ml-2">
        <svg width="17" height="14" viewBox="0 0 17 14" fill="none" stroke="#d0d0d0" strokeWidth="1.8"><path d="M1 7h14M9.5 1.5L15 7l-5.500 5.500" /></svg>
      </button>
      <div className="ml-[9px] flex h-7 flex-1 items-center gap-2 rounded bg-[#fafafa] pl-[18px]">
        <CrumbArrow />
        {crumbs.map((c) => (
          <span key={c} className="flex items-center gap-2">
            <a href="#" className="whitespace-nowrap">{c}</a>
            <CrumbArrow />
          </span>
        ))}
      </div>
      <span className="px-2.5 text-sm">»</span>
      <div className="flex items-center gap-1 pr-2 text-[#4a8cc8]">
        <button className="h-[23px] rounded-sm bg-[#4a8cc8] px-2.5 text-white">Tree</button>
        <button className="px-1.5">List</button>
        <button className="px-[9px]">Details</button>
        <button className="px-[7px]">MindMap</button>
      </div>
    </div>
  );
}

function Toggle({ open, className }: { open?: boolean; className: string }) {
  return (
    <button aria-label={open ? 'Collapse' : 'Expand'} className={clsx('absolute', className)}>
      <svg width="14" height="14" viewBox="0 0 14 14" className="block">
        <rect x="0.5" y="0.5" width="13" height="13" fill="#fff" stroke="#000" />
        <path d={open ? 'M3 6.5h8' : 'M3 6.5h8M7 2.5v8'} stroke="#000" />
      </svg>
    </button>
  );
}

interface NodeProps {
  title?: string;
  body: string;
  className: string;
  titleClass: string;
  bodyClass?: string;
  linked?: boolean;
  badge?: boolean;
  children?: ReactNode;
}

function DiagramNode({ title, body, className, titleClass, bodyClass = 'pl-2', linked, badge, children }: NodeProps) {
  const port = linked ? 'border-[#555] bg-[#85b7f5]' : 'border-[#bbb] bg-white';
  return (
    <article className={clsx('absolute flex flex-col rounded-md border-2 border-[#305c94] bg-white text-xs leading-[17px] text-[#111]', className)}>
      <span className={clsx('absolute -top-3.5 left-[3px] h-1.5 w-3.5 border', port)} />
      <span className={clsx('absolute -top-3.5 right-[3px] h-1.5 w-3.5 border', port)} />
      <div className={clsx('flex shrink-0 items-center justify-center gap-[3px] rounded-t border-b border-[#305c94] bg-linear-to-r from-white to-[#9fb6dd] pb-px', titleClass)}>
        {badge && <span className="absolute left-px top-[3px]"><FBadge /></span>}
        {title && (
          <>
            <ReqIcon />
            <h2 className="whitespace-pre text-center">{title}</h2>
          </>
        )}
      </div>
      <p className={clsx('flex flex-1 items-center whitespace-pre pb-0.5', bodyClass)}>{body}</p>
      {children}
    </article>
  );
}

function FontDialog() {
  return (
    <div role="dialog" aria-label="Font Setting" className="absolute left-[438px] top-0.5 z-10 flex h-[325px] w-[434px] flex-col border border-[#555] bg-[#fafafa] text-black">
      <div className="pointer-events-none absolute -inset-x-[6px] -bottom-[8px] -top-[8px] rounded-md border-4 border-[#ff2d6e] bg-transparent shadow-[2px_3px_8px_rgba(0,0,0,0.5),inset_0_0_6px_rgba(0,0,0,0.35)]" />
      <div className="pointer-events-none absolute -right-px -top-[39px]"><Marker n={3} /></div>
      <div className="h-[97px] shrink-0 border-b border-[#c0c0c0] bg-white">
        <div className="flex h-9 items-center pl-[9px] pr-6 pt-0.5 text-[15px]">
          <svg width="20" height="20" viewBox="0 0 20 20">
            <circle cx="10" cy="10" r="9.8" fill="#0f8fb8" />
            <circle cx="10" cy="10" r="8.3" fill="#082c42" />
            <ellipse cx="10" cy="10.5" rx="4.3" ry="5.5" fill="#1590c8" />
            <path d="M5.8 9.5C6 5 10 4 12 6c0 3-3 5-6.200 3.500z" fill="#e4f3f8" />
            <circle cx="10" cy="6.8" r="1.3" fill="#082c42" />
          </svg>
          <span className="pl-[5px]">Font Setting</span>
          <div className="ml-auto flex items-center gap-[46px]">
            <button aria-label="Minimize dialog"><svg width="12" height="12" viewBox="0 0 12 12"><path d="M0 5.500h12" stroke="#000" /></svg></button>
            <button aria-label="Maximize dialog"><svg width="12" height="12" viewBox="0 0 12 12"><rect x="0.5" y="0.5" width="11" height="11" fill="none" stroke="#000" /></svg></button>
            <button aria-label="Close dialog"><svg width="12" height="12" viewBox="0 0 12 12"><path d="M0 0l12 12M12 0L0 12" stroke="#000" strokeWidth="1.2" /></svg></button>
          </div>
        </div>
        <p className="pl-[15px] pt-[23px]">Set the font style.</p>
      </div>
      <div className="flex flex-1 flex-col pl-[19px] pr-[15px] pt-[21px]">
        <div className="flex items-center gap-[5px] pr-1">
          <h3 className="text-xs font-bold text-[#2b78b9]">Font</h3>
          <div className="h-px flex-1 bg-[#808080]" />
        </div>
        <div className="mt-[11px] flex gap-[5px]">
          <div className="flex h-[22px] w-[200px] border border-[#c3c5c9] bg-white">
            <label className="flex min-w-0 flex-1 items-center pl-[3px]">
              <span className="bg-[#91c3ee] text-[#1d3c5c]">
                <input aria-label="Font name" defaultValue="Meiryo" className="block h-4 w-10 bg-transparent outline-none" />
              </span>
            </label>
            <button aria-label="Font list" className="-my-px -mr-px flex w-[15px] items-center justify-center border border-[#8a8d93] bg-[#fafafa]"><Chevron color="#222" /></button>
          </div>
          <Combo label="Font size" value="11" className="w-[50px]" />
        </div>
        <div className="mt-1.5 flex h-[22px] items-center text-[#555]">
          <button className="w-[21px] font-serif font-bold">B</button>
          <button className="w-[35px] font-serif font-bold italic">I</button>
          <button className="w-[21px] font-bold underline">U</button>
          <button className="w-[36px] text-[10px] font-bold line-through">abc</button>
          <button aria-label="Font color" className="ml-[3px] flex items-center gap-2">
            <span className="flex w-4 justify-center border-b-[3px] border-black text-[19px] leading-[16px] text-[#888]">A</span>
            <svg width="6" height="4" viewBox="0 0 6 4"><path d="M0 0h6L3 3.500z" fill="#222" /></svg>
          </button>
        </div>
        <div className="mt-[18px] flex items-center gap-[5px] pr-1">
          <h3 className="text-xs font-bold text-[#2b78b9]">Alignment</h3>
          <div className="h-px flex-1 bg-[#808080]" />
        </div>
        <div className="mt-[9px] flex items-center">
          <span className="w-[63px]">Horizontal:</span>
          {(['left', 'center', 'right'] as const).map((k) => (
            <button
              key={k}
              aria-label={`Horizontal ${k}`}
              className={clsx('mr-[5px] flex size-[23px] items-center justify-center border', k === 'center' ? 'border-[#2c6a94] bg-[#e4edf2]' : 'border-transparent')}
            >
              <AlignIcon kind={k} color="#666" weight={1} />
            </button>
          ))}
        </div>
        <div className="mt-5 flex justify-end gap-[5px]">
          <button className="h-[23px] w-[90px] border border-[#8c8c8c] bg-[#efefef]">OK</button>
          <button className="h-[23px] w-[90px] border border-[#8c8c8c] bg-[#efefef]">Cancel</button>
        </div>
      </div>
    </div>
  );
}

const palette: Tone[] = ['green', 'orange', 'purple', 'blue', 'red', 'yellow', 'black'];

function Canvas() {
  return (
    <main className="relative min-h-0 flex-1 bg-white">
      <div className="absolute inset-0 overflow-hidden">
        {/* connectors between parents and children */}
        <svg width="1195" height="646" viewBox="0 0 1195 646" className="absolute left-0 top-0" fill="none">
          <path d="M0 120h445M146 243h922M312 366h552" stroke="#808080" strokeWidth="2" />
          <path d="M519 366h190" stroke="#333" strokeWidth="2" />
          <path d="M286.5 0v22M286.5 104v16M146.5 243v24M1067.5 243v24M614.5 341v25M312.5 366v24M519.5 366v24M709.5 366v24M863.5 366v24" stroke="#333" />
        </svg>

        <DiagramNode body="settings" className="-left-[60px] top-[145px] h-[80px] w-[122px]" titleClass="h-[26px]" bodyClass="pb-4 pl-[61px]" />
        <div className="absolute left-[11px] top-0.5 flex h-[171px] w-7 flex-col items-center gap-1.5 border border-[#ddd] bg-[#fafafa] pt-2.5">
          {palette.map((t) => <ReqIcon key={t} tone={t} />)}
        </div>

        <DiagramNode title="ADAPTIVE driving" body={'Specific requirements for\nADAPTIVE driving'} badge className="left-[197px] top-6 h-[71px] w-[178px]" titleClass="h-[26px] pl-[15px]">
          <span className="absolute -inset-1 border border-dashed border-[#555]" />
          <span className="absolute -left-[9px] -top-[10px] size-[9px] border-2 border-[#aaa] bg-white" />
          <span className="absolute -right-[9px] -top-[10px] size-[9px] border-2 border-[#aaa] bg-white" />
          <span className="absolute -bottom-[9px] -left-[9px] size-[9px] border-2 border-[#aaa] bg-white" />
          <span className="absolute -bottom-[9px] -right-[9px] size-[9px] border-2 border-[#aaa] bg-white" />
        </DiagramNode>
        <Toggle open className="left-[279px] top-[101px]" />

        <DiagramNode title={'Judgment on\navailability of\nADAPTIVE driving'} body="" className="left-[74px] top-[268px] h-[74px] w-[143px]" titleClass="h-[57px] pr-1" />
        <Toggle className="left-[139px] top-[348px]" />

        <DiagramNode title="Start ADAPTIVE driving" body={'Start the C.C. driving and\nnotify it to the driver'} className="left-[523px] top-[268px] h-[73px] w-[183px]" titleClass="h-[26px] pr-1" />
        <Toggle open className="left-[607px] top-[347px]" />

        <DiagramNode
          title="Performing ADAPTIVE driving"
          body={'Calculate necessary acceleration/\ndeceleration speed and issue a request\nto engine and brakes'}
          className="left-[952px] top-[268px] h-[85px] w-[229px]"
          titleClass="h-[26px] pr-1"
        />
        <Toggle className="left-[1060px] top-[359px]" />

        <DiagramNode
          linked
          title="Start C.C. driving"
          body={'When the driver requests\nthe start of the C.C.\ndriving in a state where\nthe C.C. driving can be\nstarted, the current own\nspeed is set to the target\nspeed, and the C.C.\ndriving with the ADAPTIVE\nmode is started.'}
          className="left-[229px] top-[391px] h-[189px] w-[165px]"
          titleClass="h-[26px] pr-1"
        />
        <DiagramNode
          linked
          title={'Notification of C.C. driving\ncondition'}
          body={'Request the meter control system to\nnotify the driver that the C.C. driving\nhas started and the target speed.\nDepending on the shipping\ndestination, it is necessary to change\nkm/h and MPH display.'}
          className="left-[406px] top-[391px] h-[189px] w-[226px]"
          titleClass="h-[41px] pr-1"
        />
        <DiagramNode
          linked
          title={'Judgement of\npreceding\nvehicle presence'}
          body={'Judge whether\nthere is a preceding\nvehicle or not.'}
          className="left-[644px] top-[391px] h-[189px] w-[129px]"
          titleClass="h-[57px] pr-1"
        />
        <DiagramNode
          linked
          title={'Notification of\npreceding vehicle\npresence'}
          body={'Notify the presence or\nabsence of a preceding\nvehicle to the driver'}
          className="left-[785px] top-[391px] h-[189px] w-[155px]"
          titleClass="h-[57px] pr-1"
        />

        <div className="pointer-events-none absolute left-[185px] top-2 h-[99px] w-[204px] rounded-md border-4 border-[#ff2d6e] shadow-[1px_2px_5px_rgba(0,0,0,0.4),inset_0_0_5px_rgba(0,0,0,0.3)]" />

        <button aria-label="Hide left panel" className="absolute left-0 top-[274px] flex h-[30px] w-2 items-center justify-center border border-[#ccc] bg-[#f7f7f7]">
          <svg width="4" height="8" viewBox="0 0 4 8"><path d="M4 0v8L0 4z" fill="#888" /></svg>
        </button>
        <button aria-label="Show right panel" className="absolute right-0 top-[287px] flex h-[30px] w-2 items-center justify-center border border-[#ccc] bg-[#f7f7f7]">
          <svg width="4" height="8" viewBox="0 0 4 8"><path d="M4 0v8L0 4z" fill="#888" /></svg>
        </button>
      </div>
      <div className="pointer-events-none absolute -top-2.5 left-[158px] z-10"><Marker n={1} /></div>
      <FontDialog />
    </main>
  );
}

/* ---------- status bar ---------- */

function StatusBar() {
  return (
    <footer className="flex h-7 shrink-0 items-center justify-end border-t border-[#d5d6d8] bg-[#e3e4e6] pr-[3px] pt-px text-[#444]">
      <button aria-label="Left pane" className="mr-2 flex size-[22px] items-center justify-center rounded-sm border border-[#aaa] bg-[#f2f2f2]">
        <svg width="16" height="14" viewBox="0 0 16 14"><rect x="0.5" y="0.5" width="14" height="12" fill="#fff" stroke="#666" /><path d="M0 1.5h15" stroke="#777" strokeWidth="2" /><path d="M1 3h4v9H1z" fill="#c5e0f8" /><path d="M5.5 3v10" stroke="#666" /></svg>
      </button>
      <button aria-label="Bottom pane" className="mr-3">
        <svg width="16" height="14" viewBox="0 0 16 14"><rect x="0.5" y="0.5" width="14" height="12" fill="#fff" stroke="#777" /><path d="M0 1.5h15" stroke="#777" strokeWidth="2" /><path d="M1 8.5h13V12H1z" fill="#c5e0f8" /><path d="M0 8.500h15" stroke="#777" /></svg>
      </button>
      <button aria-label="Right pane" className="mr-3">
        <svg width="16" height="14" viewBox="0 0 16 14"><rect x="0.5" y="0.5" width="14" height="12" fill="#fff" stroke="#777" /><path d="M0 1.5h15" stroke="#777" strokeWidth="2" /><path d="M8 3h6v9H8z" fill="#c5e0f8" /><path d="M7.5 3v10" stroke="#777" /></svg>
      </button>
      <button aria-label="Inspector" className="mr-3"><InspectorIcon size={16} mono /></button>
      <button aria-label="View settings" className="mr-4">
        <svg width="16" height="16" viewBox="0 0 16 16"><path d="M7 13H0.500V1.500h15V6" fill="#fff" stroke="#666" /><path d="M0 2.5h16" stroke="#666" strokeWidth="2" /><circle cx="11" cy="11" r="3" fill="none" stroke="#444" strokeWidth="2.5" strokeDasharray="1.6 0.75" /><circle cx="11" cy="11" r="2" fill="none" stroke="#444" /></svg>
      </button>
      <span className="w-[52px]">100%</span>
      <button aria-label="Zoom out"><svg width="10" height="10" viewBox="0 0 10 10"><path d="M0.5 5.5h9" stroke="#555" /></svg></button>
      <input
        type="range"
        aria-label="Zoom"
        defaultValue={25}
        className="mx-3 h-3 w-[100px] appearance-none bg-transparent [&::-webkit-slider-runnable-track]:h-px [&::-webkit-slider-runnable-track]:bg-[#777] [&::-webkit-slider-thumb]:-mt-[5px] [&::-webkit-slider-thumb]:h-[11px] [&::-webkit-slider-thumb]:w-[5px] [&::-webkit-slider-thumb]:appearance-none [&::-webkit-slider-thumb]:bg-[#666]"
      />
      <button aria-label="Zoom in"><svg width="10" height="10" viewBox="0 0 10 10"><path d="M0.5 5.5h9M5 1v9" stroke="#555" /></svg></button>
      <button aria-label="Fit" className="ml-[21px]">
        <svg width="16" height="16" viewBox="0 0 16 16" fill="#666"><path d="M8 0l3 3.500H9.500V6h-3V3.500H5zM8 16l3-3.500H9.500V10h-3v2.500H5zM0 8l3.500-3v1.500H6v3H3.500V11zM16 8l-3.500-3v1.500H10v3h2.500V11z" /></svg>
      </button>
      <button aria-label="Notifications" className="ml-[22px]">
        <svg width="14" height="16" viewBox="0 0 14 16" fill="#444"><path d="M7 1C4 1 3 3.500 3 6c0 3-1 4.500-2.500 6.500h13C12 10.500 11 9 11 6c0-2.500-1-5-4-5zM5 13.500h4L8 15H6z" /></svg>
      </button>
      <svg width="12" height="12" viewBox="0 0 12 12" className="mb-1 ml-[13px] self-end" fill="#999"><path d="M9 0h2v2H9zM9 4h2v2H9zM9 8h2v2H9zM5 4h2v2H5zM5 8h2v2H5zM1 8h2v2H1z" /></svg>
    </footer>
  );
}

export default function App() {
  return (
    <div className="flex h-screen flex-col overflow-hidden border border-[#2b579a] font-[Roboto,'Noto_Sans',sans-serif] text-[13px] leading-[18px] text-[#222]">
      <TitleBar />
      <MenuBar />
      <Ribbon />
      <div className="flex min-h-0 flex-1">
        <SidePanel />
        <div className="flex min-w-0 flex-1 flex-col">
          <DocumentTabs />
          <Breadcrumbs />
          <Canvas />
        </div>
      </div>
      <StatusBar />
    </div>
  );
}
